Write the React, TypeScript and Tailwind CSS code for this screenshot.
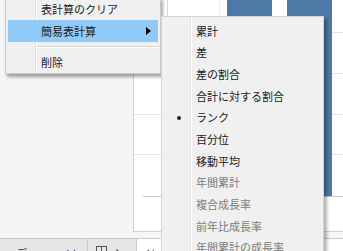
import React from "react";

const font = { fontFamily: '"Noto Sans CJK JP", "Noto Sans", sans-serif' };

const subItems: { label: string; disabled?: boolean; checked?: boolean }[] = [
  { label: "累計" },
  { label: "差" },
  { label: "差の割合" },
  { label: "合計に対する割合" },
  { label: "ランク", checked: true },
  { label: "百分位" },
  { label: "移動平均" },
  { label: "年間累計", disabled: true },
  { label: "複合成長率", disabled: true },
  { label: "前年比成長率", disabled: true },
  { label: "年間累計の成長率", disabled: true },
];

const Chart: React.FC = () => (
  <svg width="209" height="231" className="block">
    {[32.5, 73.5, 114.5, 154.5].map((y) => (
      <line key={y} x1="0" x2="209" y1={y} y2={y} stroke="#e4e4e4" />
    ))}
    <line x1="33.5" x2="33.5" y1="0" y2="196" stroke="#d6d6d6" />
    <line x1="85.5" x2="85.5" y1="0" y2="196" stroke="#ececec" />
    <rect x="93" y="0" width="45" height="196" fill="#4e79a7" />
    <rect x="153" y="0" width="45" height="196" fill="#4e79a7" />
    <line x1="9" x2="209" y1="196.5" y2="196.5" stroke="#c6c6c6" />
  </svg>
);

const GridIcon: React.FC = () => (
  <svg width="11" height="11" viewBox="0 0 11 11" className="shrink-0">
    <rect x="0.5" y="0.5" width="10" height="10" fill="none" stroke="#555" />
    <line x1="5.5" y1="0" x2="5.5" y2="11" stroke="#555" />
    <line x1="0" y1="5.5" x2="11" y2="5.5" stroke="#555" />
  </svg>
);

const MainMenu: React.FC = () => (
  <div className="absolute left-[5px] top-[-3px] w-[156px] border border-[#c9c9c9] bg-[#f0f0f0] shadow-[2px_3px_3px_rgba(0,0,0,0.35)] text-[11px] text-[#1a1a1a]">
    <div className="relative">
      <div className="absolute left-[29px] top-0 bottom-0 border-l border-[#e2e2e2] border-r-white border-r" />
      <div className="relative flex h-[22px] items-center pl-[35px]">表計算のクリア</div>
      <div className="relative mx-[2px] flex h-[22px] items-center bg-[#91c9f7] pl-[33px]">
        <span className="flex-1">簡易表計算</span>
        <svg width="5" height="8" viewBox="0 0 5 8" className="mr-[7px]">
          <path d="M0 0 L5 4 L0 8 Z" fill="#000" />
        </svg>
      </div>
      <div className="relative flex h-[9px] items-center pl-[31px]">
        <div className="h-0 flex-1 border-t border-[#d7d7d7] border-b border-b-white" />
      </div>
      <div className="relative flex h-[22px] items-center pl-[35px]">削除</div>
    </div>
  </div>
);

const SubMenu: React.FC = () => (
  <div className="absolute left-[161px] top-[16px] w-[163px] border border-[#d4d4d4] bg-[#f0f0f0] pt-[3px] shadow-[3px_3px_3px_rgba(0,0,0,0.3)] text-[11px]">
    <div className="absolute left-[28px] top-0 bottom-0 border-l border-[#e4e4e4] border-r border-r-white" />
    {subItems.map((item) => (
      <div
        key={item.label}
        className={
          "relative flex h-[21.7px] items-center " +
          (item.disabled ? "text-[#7c7c7c]" : "text-[#1a1a1a]")
        }
      >
        <span className="flex w-[34px] justify-center">
          {item.checked ? <span className="block h-[4px] w-[4px] rounded-full bg-[#222]" /> : null}
        </span>
        <span>{item.label}</span>
      </div>
    ))}
  </div>
);

export default function App() {
  return (
    <div
      className="relative h-[251px] w-[343px] overflow-hidden bg-[#f5f5f5]"
      style={font}
    >
      <div className="flex h-[238px]">
        <div className="w-[133px] shrink-0 bg-[#f5f5f5]" />
        <div className="h-[232px] flex-1 border-l border-b border-[#cfcfcf] bg-white">
          <Chart />
        </div>
      </div>
      <div className="flex h-[13px] border-t border-[#c8c8c8] bg-[#e6e6e6] text-[11px] text-[#333]">
        <div className="flex w-[88px] items-start gap-[28px] border-r border-[#c8c8c8] pl-[16px] pt-[6px]">
          <span>データ</span>
          <span>ソース</span>
        </div>
        <div className="flex w-[49px] items-start gap-[6px] border-r border-[#c8c8c8] pl-[8px] pt-[7px]">
          <GridIcon />
          <span className="mt-[-1px]">シート</span>
        </div>
        <div className="flex flex-1 items-start bg-white pl-[8px] pt-[6px]">
          <span>Ai</span>
        </div>
      </div>
      <MainMenu />
      <SubMenu />
    </div>
  );
}
